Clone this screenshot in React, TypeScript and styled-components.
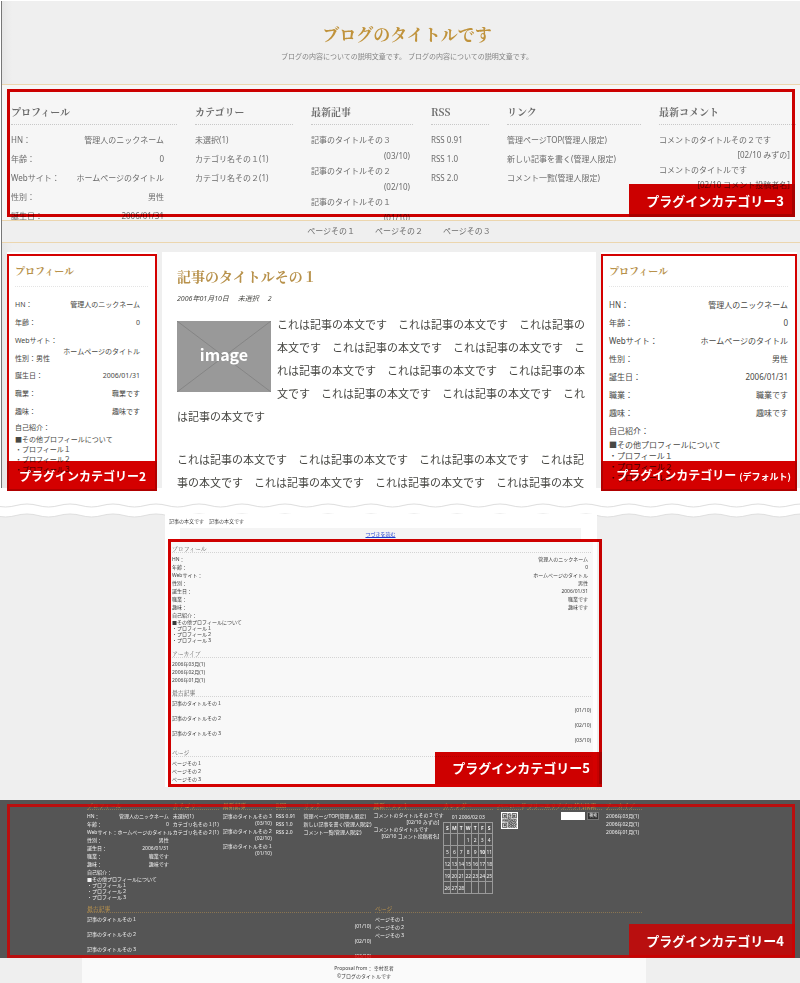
import React from "react";
import styled, { createGlobalStyle, css } from "styled-components";

const sans = `"Noto Sans", "Noto Sans CJK JP", sans-serif`;
const serif = `"Noto Serif CJK JP", "Liberation Serif", "Noto Sans CJK JP", serif`;

const Global = createGlobalStyle`
  * { box-sizing: border-box; }
  body { margin: 0; background: #fff; font-family: ${sans}; color: #484844; font-size: 8px; }
  h1, h2, h3, p, ul, dl, dd, dt { margin: 0; padding: 0; font-weight: 400; }
  ul { list-style: none; }
  a { color: inherit; text-decoration: none; white-space: nowrap; }
`;

/* ---------- overlays that mark each plug-in area ---------- */

type Tone = "multiply" | "glaze";

const Outline = styled.div<{ $inset: string; $thick: number; $tone?: Tone }>`
  position: absolute;
  inset: ${(p) => p.$inset};
  border: ${(p) => p.$thick}px solid ${(p) => (p.$tone === "glaze" ? "rgba(208,0,0,0.82)" : "#d40000")};
  mix-blend-mode: ${(p) => (p.$tone === "glaze" ? "normal" : "multiply")};
  pointer-events: none;
`;

const Badge = styled.div<{ $inset: string; $height: number; $size: number; $pad: string; $tone?: Tone }>`
  position: absolute;
  inset: ${(p) => p.$inset};
  height: ${(p) => p.$height}px;
  padding: ${(p) => p.$pad};
  display: flex;
  align-items: center;
  justify-content: flex-end;
  color: #fff;
  font: 700 ${(p) => p.$size}px / 20px "Noto Sans CJK JP", sans-serif;
  white-space: nowrap;
  &::before {
    content: "";
    position: absolute;
    inset: 0;
    background: ${(p) => (p.$tone === "glaze" ? "rgba(208,0,0,0.82)" : "#d40000")};
    mix-blend-mode: ${(p) => (p.$tone === "glaze" ? "normal" : "multiply")};
  }
  span { position: relative; }
  small { font-size: 9px; margin-left: 3px; }
`;

/* ---------- page header ---------- */

const Upper = styled.div`
  position: relative;
  z-index: 1;
  margin-top: 1px;
  margin-left: 1px;
  border-left: 1px solid #777;
  background: linear-gradient(90deg, #e6e6e6 0, #efefef 10px);
`;

const Header = styled.header`
  padding: 21px 0 18px 12px;
  text-align: center;
  border-bottom: 1px solid #ecd6ae;
  h1 { font: 700 17px/24px ${serif}; color: #c0933c; }
  p { margin-top: 4px; padding-bottom: 2px; font-size: 7px; line-height: 14px; color: #848484; }
`;

const TopArea = styled.section`
  position: relative;
  height: 135px;
  background: #f6f6f6;
`;

const TopClip = styled.div`
  height: 100%;
  overflow: hidden;
  padding: 16px 4px 0 9px;
  display: grid;
  grid-template-columns: 166fr 98fr 102fr 58fr 134fr 137fr;
  column-gap: 18px;
  color: #6c6c6c;
  > section { min-width: 0; }
`;

const TopHeading = styled.h2`
  font: 700 10px/22px ${serif};
  height: 24px;
  margin-bottom: 5px;
  border-bottom: 1px dotted #c8c8c8;
  white-space: nowrap;
`;

const Pairs = styled.dl<{ $row: number; $right?: number }>`
  padding-right: ${(p) => p.$right ?? 0}px;
  > div {
    display: flex;
    justify-content: space-between;
    line-height: ${(p) => p.$row}px;
    white-space: nowrap;
  }
`;

const Links = styled.ul<{ $row: number }>`
  li { line-height: ${(p) => p.$row}px; white-space: nowrap; }
`;

const Dated = styled.ul<{ $row: number; $sub: number; $right?: number; $top?: number }>`
  padding: ${(p) => p.$top ?? 0}px ${(p) => p.$right ?? 0}px 0 0;
  li { line-height: ${(p) => p.$row}px; white-space: nowrap; }
  li span { display: flex; justify-content: flex-end; line-height: ${(p) => p.$sub}px; }
`;

const PageNav = styled.nav`
  display: flex;
  justify-content: center;
  gap: 20px;
  height: 23px;
  padding-right: 4px;
  border: solid #ecd6ae;
  border-width: 1px 0;
  background: #efefef;
  line-height: 20px;
  color: #6c6c6c;
`;

/* ---------- three-column area ---------- */

const Columns = styled.main`
  display: grid;
  grid-template-columns: 150fr 434fr 196fr;
  column-gap: 5px;
  padding: 9px 3px 0 5px;
  height: 245px;
`;

const Side = styled.aside<{ $size: number }>`
  position: relative;
  background: #fff;
  padding: 9px 9px 0 8px;
  min-width: 0;
  font-size: ${(p) => p.$size}px;
`;

const SideHeading = styled.h2`
  font: 700 10px/20px ${serif};
  color: #b8924c;
  height: 26px;
  margin-bottom: 9px;
  border-bottom: 1px dotted #e4e4e4;
`;

const DroppedPairs = styled(Pairs)`
  > div {
    flex-direction: column;
    height: 18px;
  }
  dd {
    align-self: flex-end;
    line-height: 12px;
    margin-top: -4px;
  }
`;

const InlinePairs = styled(Pairs)`
  > div {
    justify-content: flex-start;
  }
`;

const About = styled.div<{ $row: number; $first: number }>`
  p { line-height: ${(p) => p.$row}px; white-space: nowrap; }
  p:first-child { line-height: ${(p) => p.$first}px; }
`;

const Article = styled.article`
  background: #fff;
  padding: 14px 0 0 15px;
  min-width: 0;
  overflow: hidden;
  h2 { font: 700 14px/20px ${serif}; color: #b8924c; }
`;

const Meta = styled.p`
  display: flex;
  gap: 9px;
  margin: 6px 0 7px;
  font-size: 7px;
  line-height: 14px;
  font-style: italic;
`;

const Body = styled.p`
  font-size: 11px;
  line-height: 23px;
  margin-bottom: 20px;
  white-space: pre;
`;

const Thumb = styled.svg`
  float: left;
  width: 94px;
  height: 71px;
  margin: 8px 6px 0 0;
`;

/* ---------- torn edge ---------- */

const Waves = styled.svg`
  display: block;
  width: 100%;
  height: 30px;
  margin-bottom: -4px;
  position: relative;
`;

/* ---------- single-column preview ---------- */

const Preview = styled.section`
  background: #efefef;
  padding: 0 203px 13px 165px;
  font-size: 5px;
  color: #3c3c3c;
`;

const Sheet = styled.div`
  position: relative;
  background: #fff;
  padding: 3px 4px 3px 4px;
  > p { line-height: 8px; }
`;

const More = styled.div`
  margin: 3px 12px 0 11px;
  height: 12px;
  background: #f4f4f4;
  text-align: center;
  line-height: 12px;
  a { color: #1f3fd0; text-decoration: underline; }
`;

const Stack = styled.div`
  background: #f8f8f8;
  padding: 5px 2px 1px 3px;
`;

const MiniHeading = styled.h3<{ $dark?: boolean }>`
  font-family: ${serif};
  line-height: 7px;
  height: 8px;
  margin-bottom: 2px;
  white-space: nowrap;
  ${(p) =>
    p.$dark
      ? css`
          color: #c79a4b;
          border-bottom: 1px dotted #8a7550;
        `
      : css`
          color: #666;
          border-bottom: 1px dotted #d4d4d4;
        `}
`;

const Block = styled.section<{ $gap: number }>`
  min-width: 0;
  padding-bottom: ${(p) => p.$gap}px;
`;

/* ---------- dark footer area ---------- */

const Dark = styled.section`
  position: relative;
  background: #555;
  color: #f2f2f2;
  font-size: 5px;
`;

const DarkClip = styled.div`
  height: 158px;
  overflow: hidden;
  padding: 2px 158px 0 87px;
`;

const DarkGrid = styled.div<{ $cols: string }>`
  display: grid;
  grid-template-columns: ${(p) => p.$cols};
  column-gap: 4px;
`;

const Calendar = styled.table`
  width: 100%;
  border-collapse: collapse;
  table-layout: fixed;
  caption { line-height: 10px; white-space: pre; }
  th, td {
    border: 1px solid #999;
    padding: 0;
    height: 12px;
    line-height: 8px;
    text-align: center;
    font-size: 5px;
  }
  th { height: 11px; }
`;

const Qr = styled.svg`
  display: block;
  width: 17px;
  height: 17px;
  margin: 0 4px;
`;

const Search = styled.form`
  display: flex;
  gap: 2px;
  input { width: 24px; height: 8px; border: 0; padding: 0; background: #fff; font-size: 5px; }
  button {
    width: 12px;
    height: 8px;
    padding: 0;
    border: 1px solid #777;
    background: #333;
    color: #fff;
    font: 4px/6px ${sans};
  }
`;

const Bottom = styled.footer`
  background: #efefef;
  padding: 0 154px 0 82px;
  font-size: 5px;
  color: #3c3c3c;
  div { background: #fafafa; text-align: center; padding: 6px 0 3px; line-height: 8px; }
`;

/* ---------- data ---------- */

const profile: [string, string][] = [
  ["HN：", "管理人のニックネーム"],
  ["年齢：", "0"],
  ["Webサイト：", "ホームページのタイトル"],
  ["性別：", "男性"],
  ["誕生日：", "2006/01/31"],
  ["職業：", "職業です"],
  ["趣味：", "趣味です"],
];
const about = ["自己紹介：", "■その他プロフィールについて", "・プロフィール１", "・プロフィール２", "・プロフィール３"];
const categories = ["未選択(1)", "カテゴリ名その１(1)", "カテゴリ名その２(1)"];
const recent: [string, string][] = [
  ["記事のタイトルその３", "(03/10)"],
  ["記事のタイトルその２", "(02/10)"],
  ["記事のタイトルその１", "(01/10)"],
];
const oldest: [string, string][] = [
  ["記事のタイトルその１", "(01/10)"],
  ["記事のタイトルその２", "(02/10)"],
  ["記事のタイトルその３", "(03/10)"],
];
const feeds = ["RSS 0.91", "RSS 1.0", "RSS 2.0"];
const links = ["管理ページTOP(管理人限定)", "新しい記事を書く(管理人限定)", "コメント一覧(管理人限定)"];
const comments: [string, string][] = [
  ["コメントのタイトルその２です", "[02/10 みずの]"],
  ["コメントのタイトルです", "[02/10 コメント投稿者名]"],
];
const pages = ["ページその１", "ページその２", "ページその３"];
const archive = ["2006年03月(1)", "2006年02月(1)", "2006年01月(1)"];
const weeks = [
  ["", "", "", "1", "2", "3", "4"],
  ["5", "6", "7", "8", "9", "10", "11"],
  ["12", "13", "14", "15", "16", "17", "18"],
  ["19", "20", "21", "22", "23", "24", "25"],
  ["26", "27", "28", "", "", "", ""],
];
const qrRows = [
  "111111101011001111111",
  "100000101101001000001",
  "101110100110101011101",
  "101110101001101011101",
  "101110100101001011101",
  "100000101100101000001",
  "111111101010101111111",
  "000000001101000000000",
  "101101110010110110101",
  "010010001110101001110",
  "110111110101011101001",
  "001000010011100110110",
  "101011101101011011101",
  "000000001010110100110",
  "111111100110101011001",
  "100000101011011101110",
  "101110100101110010011",
  "101110101110011110100",
  "101110100011101001111",
  "100000101100110110010",
  "111111101011011011101",
];

/* ---------- pieces ---------- */

const PairRow = ({ pair: [k, v] }: { pair: [string, string] }) => (
  <div>
    <dt>{k}</dt>
    <dd>{v}</dd>
  </div>
);

const PairRows = ({ items = profile, row, right }: { items?: [string, string][]; row: number; right?: number }) => (
  <Pairs $row={row} $right={right}>
    {items.map((p) => (
      <PairRow key={p[0]} pair={p} />
    ))}
  </Pairs>
);

const AboutLines = ({ row, first }: { row: number; first: number }) => (
  <About $row={row} $first={first}>
    {about.map((t) => (
      <p key={t}>{t}</p>
    ))}
  </About>
);

const LinkList = ({ items, row }: { items: string[]; row: number }) => (
  <Links $row={row}>
    {items.map((t) => (
      <li key={t}>
        <a href="#">{t}</a>
      </li>
    ))}
  </Links>
);

type DatedProps = { items: [string, string][]; row: number; sub: number; right?: number; top?: number };

const DatedList = ({ items, row, sub, right, top }: DatedProps) => (
  <Dated $row={row} $sub={sub} $right={right} $top={top}>
    {items.map(([t, d]) => (
      <li key={t}>
        <a href="#">{t}</a>
        <span>{d}</span>
      </li>
    ))}
  </Dated>
);

const DarkBlock = ({ title, children }: { title: string; children?: React.ReactNode }) => (
  <Block $gap={5}>
    <MiniHeading $dark>{title}</MiniHeading>
    {children}
  </Block>
);

const TornEdge = () => (
  <Waves aria-hidden="true">
    <defs>
      <pattern id="torn" x="-16" width="43" height="30" patternUnits="userSpaceOnUse">
        <path d="M0 0H43V26C34 26 30 29 21.5 29S9 26 0 26Z" fill="#fff" />
        <path d="M0 16C9 16 13 19 21.5 19S34 16 43 16" fill="none" stroke="#dedede" />
        <path d="M0 26C9 26 13 29 21.5 29S34 26 43 26" fill="none" stroke="#dedede" />
      </pattern>
    </defs>
    <rect width="100%" height="30" fill="url(#torn)" />
  </Waves>
);

export default function App() {
  return (
    <>
      <Global />
      <Upper>
        <Header>
          <h1>ブログのタイトルです</h1>
          <p>ブログの内容についての説明文章です。 ブログの内容についての説明文章です。</p>
        </Header>
        <TopArea>
          <TopClip>
            <section>
              <TopHeading>プロフィール</TopHeading>
              <PairRows row={19} right={13} />
            </section>
            <section>
              <TopHeading>カテゴリー</TopHeading>
              <LinkList items={categories} row={19} />
            </section>
            <section>
              <TopHeading>最新記事</TopHeading>
              <DatedList items={recent} row={18} sub={13} right={3} top={1} />
            </section>
            <section>
              <TopHeading>RSS</TopHeading>
              <LinkList items={feeds} row={19} />
            </section>
            <section>
              <TopHeading>リンク</TopHeading>
              <LinkList items={links} row={19} />
            </section>
            <section>
              <TopHeading>最新コメント</TopHeading>
              <DatedList items={comments} row={17} sub={13} right={6} top={1} />
            </section>
          </TopClip>
          <Outline $inset="4px 5px 3px 5px" $thick={3} />
          <Badge $inset="auto 5px 3px auto" $height={33} $size={13} $pad="0 11px 0 17px">
            <span>プラグインカテゴリー3</span>
          </Badge>
        </TopArea>
        <PageNav>
          {pages.map((t) => (
            <a href="#" key={t}>
              {t}
            </a>
          ))}
        </PageNav>
        <Columns>
          <Side $size={7}>
            <SideHeading>プロフィール</SideHeading>
            <PairRows items={profile.slice(0, 2)} row={18} right={8} />
            <DroppedPairs $row={18} $right={8}>
              <PairRow pair={profile[2]} />
            </DroppedPairs>
            <InlinePairs $row={17}>
              <PairRow pair={profile[3]} />
            </InlinePairs>
            <PairRows items={profile.slice(4)} row={18} right={8} />
            <AboutLines row={10} first={14} />
            <Outline $inset="2px 0 -3px 0" $thick={2} />
            <Badge $inset="auto 0 -3px 0" $height={30} $size={12} $pad="0 11px 0 0">
              <span>プラグインカテゴリー2</span>
            </Badge>
          </Side>
          <Article>
            <h2>記事のタイトルその１</h2>
            <Meta>
              <span>2006年01月10日</span>
              <span>未選択</span>
              <span>2</span>
            </Meta>
            <Thumb viewBox="0 0 94 71" role="img" aria-label="image">
              <rect width="94" height="71" fill="#999" />
              <path d="M0 0L94 71M94 0L0 71" stroke="#858585" />
              <text x="47" y="40" textAnchor="middle" fill="#fff" fontSize="16" fontWeight="700" fontFamily="Noto Sans CJK JP, sans-serif">
                image
              </text>
            </Thumb>
            <Body>
              {"これは記事の本文です　これは記事の本文です　これは記事の\n本文です　これは記事の本文です　これは記事の本文です　こ\nれは記事の本文です　これは記事の本文です　これは記事の本\n文です　これは記事の本文です　これは記事の本文です　これ\nは記事の本文です"}
            </Body>
            <Body>
              {"これは記事の本文です　これは記事の本文です　これは記事の本文です　これは記\n事の本文です　これは記事の本文です　これは記事の本文です　これは記事の本文"}
            </Body>
          </Article>
          <Side $size={8}>
            <SideHeading>プロフィール</SideHeading>
            <PairRows row={18} />
            <AboutLines row={11} first={17} />
            <Outline $inset="2px 0 -3px 0" $thick={2} />
            <Badge $inset="auto 0 -3px 0" $height={30} $size={12} $pad="0 6px 0 0">
              <span>
                プラグインカテゴリー<small>(デフォルト)</small>
              </span>
            </Badge>
          </Side>
        </Columns>
      </Upper>

      <TornEdge />

      <Preview>
        <Sheet>
          <p>記事の本文です　記事の本文です</p>
          <More>
            <a href="#">つづきを読む</a>
          </More>
          <Stack>
            <Block $gap={7}>
              <MiniHeading>プロフィール</MiniHeading>
              <PairRows row={8} right={3} />
              <AboutLines row={6} first={8} />
            </Block>
            <Block $gap={5}>
              <MiniHeading>アーカイブ</MiniHeading>
              <LinkList items={archive} row={8} />
            </Block>
            <Block $gap={5}>
              <MiniHeading>最古記事</MiniHeading>
              <DatedList items={oldest} row={8} sub={7} />
            </Block>
            <Block $gap={0}>
              <MiniHeading>ページ</MiniHeading>
              <LinkList items={pages} row={8} />
            </Block>
          </Stack>
          <Outline $inset="25px -5px 0 3px" $thick={3} />
          <Badge $inset="auto -5px 3px auto" $height={32} $size={13} $pad="0 12px 0 17px">
            <span>プラグインカテゴリー5</span>
          </Badge>
        </Sheet>
      </Preview>

      <Dark>
        <DarkClip>
          <DarkGrid $cols="82fr 46fr 49fr 24fr 66fr 66fr 50fr 26fr 30fr 41fr 36fr">
            <DarkBlock title="プロフィール">
              <PairRows row={8} right={0} />
              <AboutLines row={6} first={8} />
            </DarkBlock>
            <DarkBlock title="カテゴリー">
              <LinkList items={categories} row={8} />
            </DarkBlock>
            <DarkBlock title="最新記事">
              <DatedList items={recent} row={8} sub={7} />
            </DarkBlock>
            <DarkBlock title="RSS">
              <LinkList items={feeds} row={8} />
            </DarkBlock>
            <DarkBlock title="リンク">
              <LinkList items={links} row={8} />
            </DarkBlock>
            <DarkBlock title="最新コメント">
              <DatedList items={comments} row={7} sub={7} />
            </DarkBlock>
            <DarkBlock title="カレンダー">
              <Calendar>
                <caption>01 2006/02 03</caption>
                <thead>
                  <tr>
                    {"SMTWTFS".split("").map((d, i) => (
                      <th key={i}>{d}</th>
                    ))}
                  </tr>
                </thead>
                <tbody>
                  {weeks.map((w, i) => (
                    <tr key={i}>
                      {w.map((d, j) => (
                        <td key={j}>{d === "10" ? <b>{d}</b> : d}</td>
                      ))}
                    </tr>
                  ))}
                </tbody>
              </Calendar>
            </DarkBlock>
            <DarkBlock title="バーコード">
              <Qr viewBox="-2 -2 25 25" role="img" aria-label="QR">
                <rect x="-2" y="-2" width="25" height="25" fill="#fff" />
                {qrRows.map((r, y) =>
                  r.split("").map((c, x) => (c === "1" ? <rect key={`${x}-${y}`} x={x} y={y} width="1" height="1" fill="#000" /> : null))
                )}
              </Qr>
            </DarkBlock>
            <DarkBlock title="フリーエリア" />
            <DarkBlock title="ブログ内検索">
              <Search>
                <input type="text" aria-label="ブログ内検索" />
                <button type="button">検索</button>
              </Search>
            </DarkBlock>
            <DarkBlock title="アーカイブ">
              <LinkList items={archive} row={8} />
            </DarkBlock>
          </DarkGrid>
          <DarkGrid $cols="284fr 267fr">
            <DarkBlock title="最古記事">
              <DatedList items={oldest} row={8} sub={7} />
            </DarkBlock>
            <DarkBlock title="ページ">
              <LinkList items={pages} row={8} />
            </DarkBlock>
          </DarkGrid>
        </DarkClip>
        <Outline $inset="4px 5px 0 7px" $thick={3} $tone="glaze" />
        <Badge $inset="auto 5px 1px auto" $height={33} $size={13} $pad="0 11px 0 17px" $tone="glaze">
          <span>プラグインカテゴリー4</span>
        </Badge>
      </Dark>

      <Bottom>
        <div>
          Proposal from： 幸村忍者
          <br />
          ©ブログのタイトルです
        </div>
      </Bottom>
    </>
  );
}
